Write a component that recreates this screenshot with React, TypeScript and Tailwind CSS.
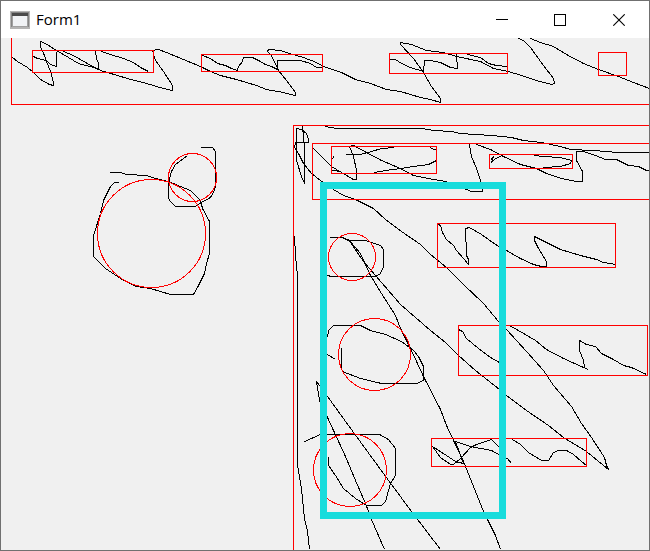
const RECTS: [number, number, number, number][] = [
  [11, 20, 660, 84],
  [32, 50, 121, 22],
  [201, 54, 121, 17],
  [389, 53, 118, 20],
  [598, 52, 28, 23],
  [293, 125, 380, 460],
  [312, 143, 360, 56],
  [331, 146, 105, 27],
  [489, 154, 83, 14],
  [437, 223, 178, 44],
  [458, 325, 189, 50],
  [431, 438, 155, 28],
];

const CIRCLES: [number, number, number][] = [
  [151, 233, 54],
  [192, 177, 24],
  [351.5, 256.5, 23.5],
  [374, 354, 36],
  [349.5, 469.5, 36.5],
];

const STROKES = [
  "12,57 17,61 27,67 33,72 40,79 49,84 53,85 53,82 50,71 46,61 44,55 40,46 40,41 45,43 56,50 68,57 78,63 93,67 103,71 107,72 127,78 146,83 163,88 172,90 172,85 163,71 155,60 152,50 158,49 166,52 183,59 200,66 210,71 220,75 236,79 256,85 266,89 283,92 290,94 295,95 295,92 286,80 278,70 271,55 267,51 268,49 280,50 289,53 303,57 316,62 323,66 341,72 355,79 370,83 386,89 400,91 420,97 430,99 440,102 440,98 431,86 423,72 413,58 400,44 400,42 411,44 426,50 443,52 456,56 480,61 493,68 508,71 521,75 536,80 551,84 554,83 553,78 543,65 530,47 523,40 518,38",
  "530,38 540,42 553,46 566,54 583,63 598,69 618,76 633,82 649,88",
  "33,56 37,58 46,60 50,64 56,66 56,51",
  "63,51 73,55 85,62 98,69 98,63 96,58 95,51",
  "101,51 110,54 123,58 133,62 140,67 148,71",
  "202,55 210,58 217,63 225,65 231,68 237,70 238,66 242,61 243,57 252,57 258,60 265,64 271,66 277,69 277,60 300,60 310,63 316,67 322,67",
  "389,59 395,59 401,63 410,67 423,71 424,60 430,60 440,62 450,67 457,68 456,54",
  "467,54 480,57 488,63 496,65 507,66",
  "109,172 120,172 126,174 146,175 155,178 168,181 180,186 190,190 200,200 202,208 209,221 209,253 206,263 204,273 198,285 193,294 170,294 150,288 136,286 120,278 105,268 93,256 93,235 100,213 103,200 110,186 114,182 118,182",
  "200,147 212,147 215,151 215,186 213,192 210,197 201,202 195,206 175,206 170,201 168,198 168,182 171,171 175,164 183,158 187,155",
  "302,126 303,137 304,146 304,183 301,176 296,160 296,128 301,129 306,133 308,139 308,142 295,142 294,147 298,153 303,163 311,173 320,180 333,189 343,195 355,199 373,208 385,219 401,231 420,244 430,254 446,267 463,284 483,303 498,321 506,329 526,351 543,370 553,385 571,406 581,423 591,437 604,457 606,465 608,469 603,465 586,451 563,437 548,425 526,410 506,395 499,389 475,370 458,355 445,342 430,330 400,304 375,275 363,261 348,239 360,253 370,275 381,293 395,315 400,328 410,348 423,376 440,409 446,425 463,461 471,481 483,511 495,535 500,549",
  "325,126 336,128 421,128 433,130 451,131 460,133 491,135 511,137 523,140 541,142 560,146 570,149 593,150 618,152 649,152",
  "312,147 321,156 331,166 346,175 353,179 356,179 356,170 353,156 349,146 353,145 366,152 381,160 400,168 413,175 428,178 445,181 466,189 471,191 482,191 482,185 480,180 476,168 471,156 469,144",
  "476,144 490,149 503,156 520,164 536,168 546,173 561,178 576,181 582,181 582,171 576,160 576,151 583,151 595,155 605,159 616,159 628,165 638,166 646,170 649,170",
  "345,154 360,154 371,151 381,148 394,147",
  "374,172 385,170 400,168 413,166 428,164 436,160",
  "430,147 433,149 436,149",
  "333,156 332,159",
  "332,170 340,171",
  "490,160 493,156 491,162 495,158 502,155",
  "534,155 543,156 560,157 571,160 570,163 560,166 543,167",
  "438,224 440,225 442,232 446,239 453,245 456,250 463,258 468,264 468,259 466,255 465,228 469,227 481,234 495,244 506,250 520,258 533,264 541,266 546,266 546,261 538,248 534,240 534,236 546,242 560,249 580,255 596,259 603,262 615,264",
  "458,329 462,331 466,338 478,348 490,357 499,362",
  "509,325 518,330 535,340 546,349 563,358 583,367 588,369",
  "584,367 583,360 579,350 579,340 586,344 595,346 601,353 613,359 623,365 631,367 646,374",
  "329,237 342,237 348,240 365,240 380,245 383,249 383,266 380,273 375,276 331,276 327,275",
  "327,337 328,330 333,325 360,325 370,330 385,334 401,341 413,350 418,356 423,366 423,380 416,383 381,383 360,378 342,371 341,368 341,347",
  "327,354 335,359",
  "294,236 295,255 297,275 297,465 301,488 304,518 307,531 309,549",
  "304,441 320,434 379,434 388,439 395,448 395,475 390,483 385,501 381,505 366,505 355,498 343,488 335,475 328,465 328,456",
  "384,549 371,519 365,503 355,480 345,456 327,417 319,400 316,381 327,396 356,436 391,484 411,511 440,549",
  "432,446 440,457 450,464 453,464 460,458 470,447 476,444 491,439 499,447",
  "432,446 446,455 455,461 463,463 455,441 470,446 491,450 500,455 507,458 511,463",
  "512,439 520,444 528,452 541,460 548,460 553,452 558,450 566,450 573,454 581,461 586,465",
];

function TitleBar() {
  return (
    <header className="flex h-[37px] shrink-0 items-center bg-white">
      <svg className="ml-[9px] shrink-0" width="20" height="18" shapeRendering="crispEdges">
        <rect x="0" y="0" width="20" height="18" fill="#b4b4b4" />
        <rect x="1" y="1" width="18" height="15" fill="#858585" />
        <rect x="2" y="2" width="16" height="3" fill="#4a4a4a" />
        <rect x="2" y="5" width="16" height="11" fill="#a0a0a0" />
        <rect x="3" y="5" width="14" height="10" fill="#f0f2f5" />
      </svg>
      <span className="ml-[6px] pb-0.5 text-[15px] leading-5 text-black">Form1</span>
      <div className="ml-auto flex">
        <button className="flex h-9 w-[58px] items-center justify-center" aria-label="Minimize">
          <svg width="12" height="12" shapeRendering="crispEdges">
            <path d="M0 5.5H12" stroke="#000" />
          </svg>
        </button>
        <button className="flex h-9 w-[58px] items-center justify-center" aria-label="Maximize">
          <svg width="12" height="12" shapeRendering="crispEdges">
            <rect x=".5" y=".5" width="11" height="11" fill="none" stroke="#000" />
          </svg>
        </button>
        <button className="flex h-9 w-[60px] items-center justify-center" aria-label="Close">
          <svg width="12" height="12">
            <path d="M.3.3L11.7 11.7M11.7.3L.3 11.7" stroke="#000" strokeWidth="1.1" />
          </svg>
        </button>
      </div>
    </header>
  );
}

function Sketch() {
  return (
    <svg className="block" width="648" height="512" viewBox="1 38 648 512" fill="none" shapeRendering="crispEdges">
      <g transform="translate(.5 .5)">
        <g stroke="#000">
          {STROKES.map((points) => (
            <polyline key={points} points={points} />
          ))}
        </g>
        <g stroke="#ff0000">
          {RECTS.map(([x, y, width, height]) => (
            <rect key={`${x}-${y}`} x={x} y={y} width={width} height={height} />
          ))}
          {CIRCLES.map(([cx, cy, r]) => (
            <circle key={`${cx}-${cy}`} cx={cx} cy={cy} r={r} />
          ))}
        </g>
      </g>
      <rect x="323.5" y="185.5" width="179" height="330" stroke="#18dcdc" strokeWidth="7" />
    </svg>
  );
}

export default function App() {
  return (
    <main className="flex h-[551px] w-[650px] flex-col overflow-hidden border border-[#707070] bg-[#f0f0f0] font-['Open_Sans','Noto_Sans',sans-serif]">
      <TitleBar />
      <Sketch />
    </main>
  );
}
